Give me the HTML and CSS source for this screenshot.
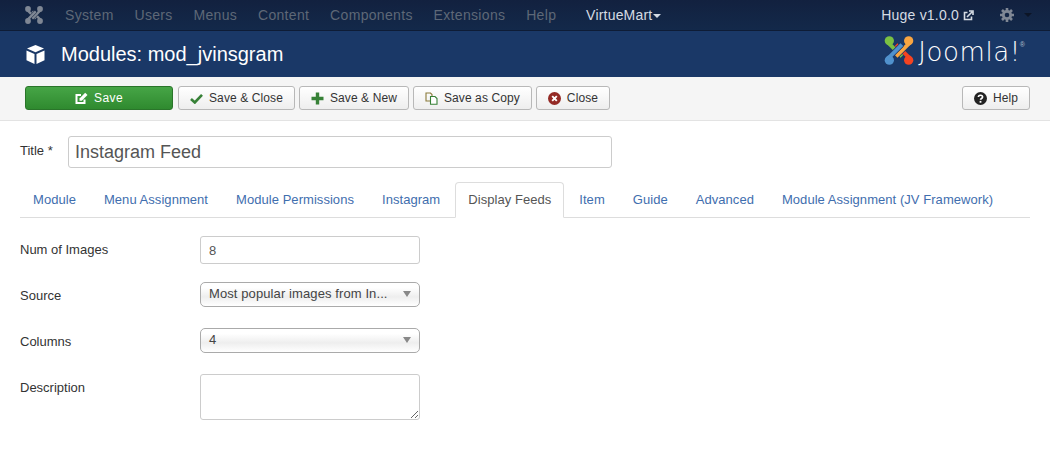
FILE: index.html
```html
<!DOCTYPE html>
<html lang="en">
<head>
    <meta charset="UTF-8">
    <title>Modules: mod_jvinsgram</title>
    <link rel="stylesheet" href="styles.css">
</head>
<body>
    <nav class="navbar">
        <div class="nav-left">
            <svg class="nav-logo" width="18" height="18" viewBox="0 0 30 30">
                <g fill="none">
                    <path d="M4 7 L18 21" stroke="#7f8794" stroke-width="4"/>
                    <path d="M26 23 L12 9" stroke="#7f8794" stroke-width="4"/>
                    <path d="M26 7 L12 21" stroke="#13243f" stroke-width="5.5"/>
                    <path d="M26 7 L12 21" stroke="#7f8794" stroke-width="4"/>
                    <path d="M4 23 L18 9" stroke="#13243f" stroke-width="5.5"/>
                    <path d="M4 23 L18 9" stroke="#7f8794" stroke-width="4"/>
                </g>
                <g fill="#7f8794">
                    <circle cx="5" cy="5" r="4.8"/>
                    <circle cx="25" cy="5" r="4.8"/>
                    <circle cx="5" cy="25" r="4.8"/>
                    <circle cx="25" cy="25" r="4.8"/>
                </g>
            </svg>
            <a class="nav-item">System</a>
            <a class="nav-item">Users</a>
            <a class="nav-item">Menus</a>
            <a class="nav-item">Content</a>
            <a class="nav-item">Components</a>
            <a class="nav-item">Extensions</a>
            <a class="nav-item">Help</a>
            <a class="nav-item nav-active">VirtueMart<span class="caret"></span></a>
        </div>
        <div class="nav-right">
            <a class="nav-site">Huge v1.0.0</a>
            <svg class="nav-ext" width="11" height="11" viewBox="0 0 11 11">
                <path d="M8.5 6.5 V9.5 H1.5 V2.5 H4.5" fill="none" stroke="#d5dbe3" stroke-width="1.6"/>
                <path d="M4 7 L9 2 M6 1 H10 V5" fill="none" stroke="#d5dbe3" stroke-width="1.6"/>
            </svg>
            <svg class="nav-gear" width="14" height="14" viewBox="0 0 14 14">
                <circle cx="7" cy="7" r="3.7" fill="none" stroke="#7f8794" stroke-width="2.8"/>
                <path d="M7 0 V3 M7 11 V14 M0 7 H3 M11 7 H14 M2 2 L4 4 M10 10 L12 12 M12 2 L10 4 M4 10 L2 12" stroke="#7f8794" stroke-width="2.6"/>
            </svg>
            <span class="caret caret-dark"></span>
        </div>
    </nav>

    <header class="subhead">
        <div class="page-title">
            <svg width="21" height="21" viewBox="0 0 21 21">
                <path d="M10.5 1 L19 4.6 L10.5 8.2 L2 4.6 Z" fill="#fff"/>
                <path d="M1.5 6.6 L9.5 10 V20 L1.5 16.2 Z" fill="#fff"/>
                <path d="M19.5 6.6 L11.5 10 V20 L19.5 16.2 Z" fill="#fff"/>
            </svg>
            <h1>Modules: mod_jvinsgram</h1>
        </div>
        <div class="brand">
            <svg width="30" height="29" viewBox="0 0 30 30">
                <g fill="none">
                    <path d="M4 7 L18 21" stroke="#7ac143" stroke-width="4"/>
                    <path d="M26 23 L12 9" stroke="#f44321" stroke-width="4"/>
                    <path d="M26 7 L12 21" stroke="#1a3867" stroke-width="5.5"/>
                    <path d="M26 7 L12 21" stroke="#f9a541" stroke-width="4"/>
                    <path d="M4 23 L18 9" stroke="#1a3867" stroke-width="5.5"/>
                    <path d="M4 23 L18 9" stroke="#5091cd" stroke-width="4"/>
                </g>
                <circle cx="5" cy="5" r="4.8" fill="#7ac143"/>
                <circle cx="25" cy="5" r="4.8" fill="#f9a541"/>
                <circle cx="25" cy="25" r="4.8" fill="#f44321"/>
                <circle cx="5" cy="25" r="4.8" fill="#5091cd"/>
            </svg>
            <span class="brand-name">Joomla!</span><sup class="brand-reg">®</sup>
        </div>
    </header>

    <div class="toolbar">
        <div class="toolbar-group">
            <button class="btn btn-save">
                <svg width="13" height="13" viewBox="0 0 13 13">
                    <path d="M9.5 7.5 V11 H1.5 V3 H6" fill="none" stroke="#fff" stroke-width="2"/>
                    <path d="M4.5 6.5 L4.5 8.8 L6.8 8.8 L12.5 3 L10.2 0.8 Z" fill="#fff"/>
                </svg>
                Save
            </button>
            <button class="btn">
                <svg width="13" height="11" viewBox="0 0 13 11"><path d="M1 6 L4.8 9.5 L12 1.8" fill="none" stroke="#378137" stroke-width="2.6"/></svg>
                Save &amp; Close
            </button>
            <button class="btn">
                <svg width="13" height="13" viewBox="0 0 13 13"><path d="M6.5 0.5 V12.5 M0.5 6.5 H12.5" fill="none" stroke="#378137" stroke-width="3.4"/></svg>
                Save &amp; New
            </button>
            <button class="btn">
                <svg width="13" height="13" viewBox="0 0 13 13">
                    <path d="M1 1 H5.5 L7 2.5 V9 H1 Z" fill="none" stroke="#8a7a3a" stroke-width="1.1"/>
                    <path d="M5.5 4.5 H10 L12 6.5 V12.2 H5.5 Z" fill="#fff" stroke="#378137" stroke-width="1.1"/>
                </svg>
                Save as Copy
            </button>
            <button class="btn">
                <svg width="13" height="13" viewBox="0 0 13 13">
                    <circle cx="6.5" cy="6.5" r="6.5" fill="#942a25"/>
                    <path d="M4.2 4.2 L8.8 8.8 M8.8 4.2 L4.2 8.8" stroke="#fff" stroke-width="1.9"/>
                </svg>
                Close
            </button>
        </div>
        <button class="btn">
            <svg width="13" height="13" viewBox="0 0 13 13">
                <circle cx="6.5" cy="6.5" r="6.5" fill="#222"/>
                <path d="M4.4 5 C4.4 2.6 8.6 2.6 8.6 5 C8.6 6.5 6.5 6.4 6.5 7.8" fill="none" stroke="#fff" stroke-width="1.6"/>
                <rect x="5.6" y="8.9" width="1.8" height="1.8" fill="#fff"/>
            </svg>
            Help
        </button>
    </div>

    <main class="content">
        <div class="title-row">
            <label class="title-label">Title *</label>
            <input class="title-input" type="text" value="Instagram Feed">
        </div>

        <ul class="tabs">
            <li class="tab">Module</li>
            <li class="tab">Menu Assignment</li>
            <li class="tab">Module Permissions</li>
            <li class="tab">Instagram</li>
            <li class="tab tab-active">Display Feeds</li>
            <li class="tab">Item</li>
            <li class="tab">Guide</li>
            <li class="tab">Advanced</li>
            <li class="tab">Module Assignment (JV Framework)</li>
        </ul>

        <div class="field">
            <label class="field-label">Num of Images</label>
            <input class="field-input" type="text" value="8">
        </div>
        <div class="field">
            <label class="field-label">Source</label>
            <div class="select"><span>Most popular images from In...</span><i class="select-arrow"></i></div>
        </div>
        <div class="field">
            <label class="field-label">Columns</label>
            <div class="select"><span>4</span><i class="select-arrow"></i></div>
        </div>
        <div class="field">
            <label class="field-label">Description</label>
            <textarea class="field-area"></textarea>
        </div>
    </main>
</body>
</html>
```
FILE: styles.css
```css
* {
    box-sizing: border-box;
}

body {
    margin: 0;
    font-family: "Liberation Sans", Arial, sans-serif;
    font-size: 13px;
    color: #333;
    background-color: #fff;
}

.navbar {
    display: flex;
    justify-content: space-between;
    align-items: center;
    height: 31px;
    padding: 0 18px 0 25px;
    background: linear-gradient(#12213f, #13294a);
    border-bottom: 1px solid #0e1c36;
}

.nav-left,
.nav-right {
    display: flex;
    align-items: center;
}

.nav-logo {
    margin-right: 22px;
}

.nav-item {
    margin-right: 20.8px;
    font-size: 14px;
    letter-spacing: 0.33px;
    color: #5e6877;
}

.nav-active {
    margin-left: 9px;
    letter-spacing: 0.2px;
    color: #d5dbe3;
}

.caret {
    display: inline-block;
    margin-left: 1px;
    vertical-align: middle;
    border-top: 4px solid #d5dbe3;
    border-left: 4px solid transparent;
    border-right: 4px solid transparent;
}

.caret-dark {
    margin-left: 10px;
    border-top-color: #0c1526;
}

.nav-site {
    font-size: 14px;
    letter-spacing: 0.2px;
    color: #d5dbe3;
}

.nav-ext {
    margin: 0 26px 0 4px;
}

.subhead {
    display: flex;
    justify-content: space-between;
    align-items: center;
    height: 46px;
    padding: 0 25px;
    background-color: #1a3867;
}

.page-title {
    display: flex;
    align-items: center;
    gap: 15px;
}

.page-title h1 {
    margin: 0;
    font-size: 20px;
    font-weight: 400;
    color: #fff;
}

.brand {
    display: flex;
    align-items: center;
    margin-bottom: 8px;
    color: #fff;
}

.brand-name {
    margin: 3px 0 0 4px;
    font-family: "DejaVu Sans", sans-serif;
    font-size: 26px;
    font-weight: 200;
    letter-spacing: 0.6px;
    line-height: 30px;
}

.brand-reg {
    align-self: flex-start;
    margin-left: -1px;
    margin-top: 5px;
    font-size: 7px;
    line-height: 12px;
    color: #b5bfcc;
}

.toolbar {
    display: flex;
    justify-content: space-between;
    align-items: flex-start;
    height: 44px;
    padding: 9px 20px 0 25px;
    background-color: #f5f5f5;
    border-bottom: 1px solid #e3e3e3;
}

.toolbar-group {
    display: flex;
    gap: 4px;
}

.btn {
    display: flex;
    align-items: center;
    justify-content: center;
    gap: 6px;
    height: 24px;
    padding: 0 11px;
    font-family: "Liberation Sans", Arial, sans-serif;
    font-size: 12px;
    letter-spacing: 0.1px;
    color: #333;
    background: linear-gradient(#fff, #eee);
    border: 1px solid #b8b8b8;
    border-radius: 3px;
}

.btn-save {
    width: 148px;
    margin-right: 1px;
    letter-spacing: 0.4px;
    color: #fff;
    background: linear-gradient(#46a546, #2f8a2f);
    border-color: #2a752a;
}

.content {
    padding: 15px 20px 0;
}

.title-row {
    display: flex;
    align-items: center;
    margin-bottom: 14px;
}

.title-label {
    width: 48px;
    margin-top: -3px;
}

.title-input {
    width: 544px;
    height: 32px;
    padding: 0 6px;
    font-family: "Liberation Sans", Arial, sans-serif;
    font-size: 18px;
    color: #555;
    border: 1px solid #ccc;
    border-radius: 3px;
}

.tabs {
    display: flex;
    height: 36px;
    margin: 0 0 18px;
    padding: 0;
    list-style: none;
    letter-spacing: 0.05px;
    border-bottom: 1px solid #ddd;
}

.tab {
    height: 36px;
    padding: 9px 12px 0;
    margin-right: 2px;
    color: #3f6eae;
    border: 1px solid transparent;
    border-radius: 4px 4px 0 0;
}

.tab-active {
    color: #555;
    background-color: #fff;
    border-color: #ddd #ddd #fff;
}

.field {
    display: flex;
    align-items: flex-start;
    margin-bottom: 18px;
}

.field-label {
    width: 180px;
    padding-top: 6px;
}

.field-input {
    width: 220px;
    height: 28px;
    padding: 0 8px;
    font-family: "Liberation Sans", Arial, sans-serif;
    font-size: 13px;
    color: #555;
    border: 1px solid #ccc;
    border-radius: 3px;
}

.select {
    display: flex;
    justify-content: space-between;
    align-items: center;
    width: 220px;
    height: 25px;
    padding: 0 8px 2px 8px;
    margin-bottom: 3px;
    letter-spacing: 0.1px;
    color: #444;
    background: linear-gradient(#fff 20%, #eee 60%, #fff);
    border: 1px solid #aaa;
    border-radius: 5px;
}

.select-arrow {
    border-top: 6px solid #888;
    border-left: 4px solid transparent;
    border-right: 4px solid transparent;
}

.field-area {
    display: block;
    width: 220px;
    height: 46px;
    border: 1px solid #ccc;
    border-radius: 3px;
}
```
